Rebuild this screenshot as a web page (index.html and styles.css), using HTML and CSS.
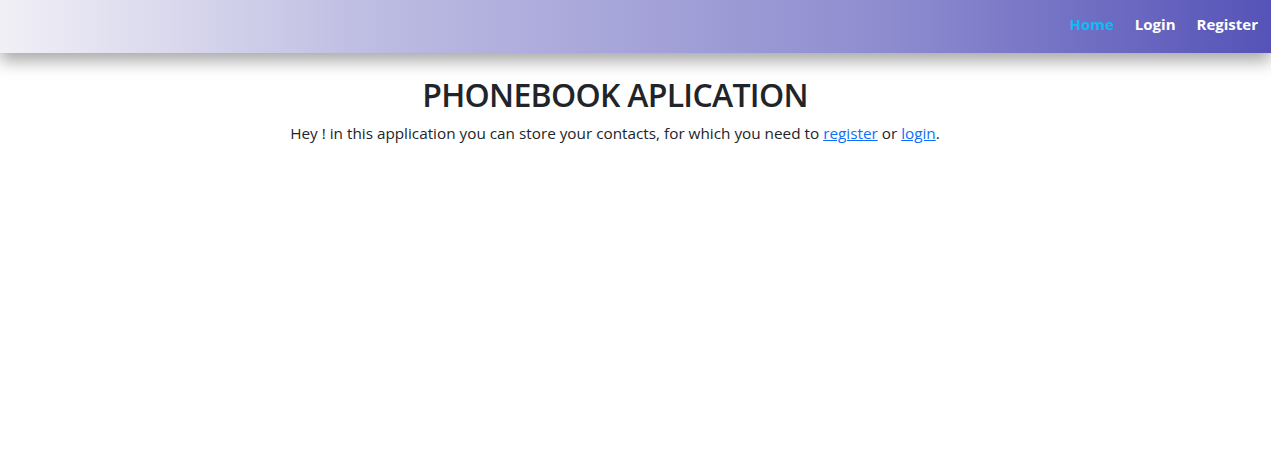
FILE: index.html
```html
<!DOCTYPE html>
<html lang="en">
<head>
<meta charset="utf-8">
<title>Phonebook</title>
<link rel="stylesheet" href="styles.css">
</head>
<body>
<header class="header">
  <nav class="nav">
    <a class="nav-link active" href="#">Home</a>
    <a class="nav-link" href="#">Login</a>
    <a class="nav-link" href="#">Register</a>
  </nav>
</header>
<main class="main">
  <h1 class="title">PHONEBOOK APLICATION</h1>
  <p class="intro">Hey ! in this application you can store your contacts, for which you need to <a href="#">register</a> or <a href="#">login</a>.</p>
</main>
</body>
</html>
```
FILE: styles.css
```css
* { box-sizing: border-box; }
html, body { margin: 0; padding: 0; background: #fff; }
body {
  font-family: "Open Sans", "Noto Sans", sans-serif;
  color: #212529;
  font-size: 16px;
  line-height: 1.5;
}
.header {
  height: 53px;
  background: linear-gradient(to right, #f1f0f6 0%, #bcbbe2 30%, #8e8ccf 70%, #5553b7 100%);
  box-shadow: 0 8px 16px rgba(0, 0, 0, 0.35);
  display: flex;
  justify-content: flex-end;
  align-items: center;
  padding-right: 13px;
  padding-bottom: 4px;
}
.nav { display: flex; gap: 21px; }
.nav-link {
  color: #fff;
  font-weight: 700;
  font-size: 15px;
  text-decoration: none;
}
.nav-link.active { color: #0dbcf5; }
.main { text-align: center; padding: 23px 41px 0 0; }
.title {
  margin: 0;
  font-size: 32px;
  font-weight: 600;
  letter-spacing: -0.7px;
  line-height: 1.2;
}
.intro { margin: 8px 0 0; font-size: 15.3px; }
.intro a { color: #0d6efd; }
```
